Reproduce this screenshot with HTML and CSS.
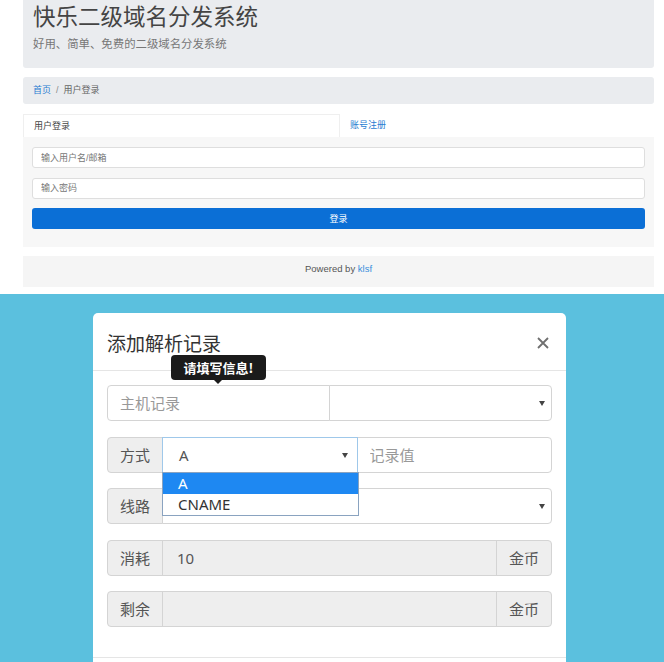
FILE: index.html
```html
<!DOCTYPE html>
<html lang="zh-CN">

<head>
    <meta charset="UTF-8">
    <meta name="viewport" content="width=device-width, initial-scale=1.0">
    <title>快乐二级域名分发系统</title>
    <link rel="stylesheet" href="styles.css">
</head>

<body>

    <!-- 登录页 -->
    <div class="page">
        <div class="jumbotron">
            <h1>快乐二级域名分发系统</h1>
            <p>好用、简单、免费的二级域名分发系统</p>
        </div>

        <div class="breadcrumb">
            <a href="#">首页</a><span class="sep">/</span><span>用户登录</span>
        </div>

        <div class="tabs">
            <div class="tab active">用户登录</div>
            <a class="tab" href="#">账号注册</a>
        </div>

        <form class="login">
            <input type="text" placeholder="输入用户名/邮箱">
            <input type="password" placeholder="输入密码">
            <button type="button">登录</button>
        </form>

        <div class="footer">Powered by <a href="#">klsf</a></div>
    </div>

    <!-- 添加解析记录弹窗 -->
    <div class="overlay">
        <div class="modal">
            <div class="modal-header">
                <h4>添加解析记录</h4>
                <svg class="close" width="12" height="12" viewBox="0 0 12 12">
                    <path d="M1 1L11 11M11 1L1 11" stroke="#6f6f6f" stroke-width="1.8" fill="none" />
                </svg>
            </div>

            <div class="tip">请填写信息!</div>

            <div class="modal-body">
                <div class="input-group">
                    <input class="form-control half" type="text" placeholder="主机记录">
                    <div class="form-control select half"></div>
                </div>

                <div class="input-group">
                    <span class="addon">方式</span>
                    <div class="form-control select focus third">
                        <span class="value">A</span>
                        <ul class="dropdown">
                            <li class="selected">A</li>
                            <li>CNAME</li>
                        </ul>
                    </div>
                    <input class="form-control third" type="text" placeholder="记录值">
                </div>

                <div class="input-group">
                    <span class="addon">线路</span>
                    <div class="form-control select grow"></div>
                </div>

                <div class="input-group">
                    <span class="addon">消耗</span>
                    <div class="form-control readonly grow">10</div>
                    <span class="addon right">金币</span>
                </div>

                <div class="input-group">
                    <span class="addon">剩余</span>
                    <div class="form-control readonly grow"></div>
                    <span class="addon right">金币</span>
                </div>
            </div>

            <div class="modal-footer"></div>
        </div>
    </div>

</body>

</html>
```

FILE: styles.css
```css
body {
    margin: 0;
    font-family: "Liberation Sans", "Noto Sans CJK SC", sans-serif;
    background-color: #fff;
    width: 664px;
    height: 662px;
    overflow: hidden;
}

a {
    text-decoration: none;
    color: #2a7dd1;
}

/* 登录页 */
.page {
    margin-left: 23px;
    width: 631px;
    padding-bottom: 7px;
}

.jumbotron {
    background-color: #eaecef;
    padding: 4px 10px 17px;
    border-radius: 0 0 3px 3px;
}

.jumbotron h1 {
    margin: 0;
    font-size: 22.5px;
    line-height: 28px;
    font-weight: normal;
    color: #444;
}

.jumbotron p {
    margin: 5px 0 0;
    font-size: 11.4px;
    line-height: 14px;
    color: #777;
}

.breadcrumb {
    margin-top: 9px;
    height: 27px;
    line-height: 27px;
    padding: 0 10px;
    background-color: #eaecef;
    border-radius: 3px;
    font-size: 9px;
    color: #666;
}

.breadcrumb .sep {
    margin: 0 5px;
    color: #888;
}

.tabs {
    margin-top: 10px;
    display: flex;
    height: 23px;
}

.tab {
    line-height: 23px;
    font-size: 9px;
    padding: 0 10px;
}

.tab.active {
    width: 295px;
    color: #444;
    border: 1px solid #efefef;
    border-bottom: none;
    line-height: 22px;
}

.login {
    background-color: #f7f7f7;
    padding: 10px 9px 18px;
    display: flex;
    flex-direction: column;
    gap: 9.5px;
}

.login input {
    box-sizing: border-box;
    height: 21px;
    margin: 0;
    padding: 0 8px;
    border: 1px solid #dedede;
    border-radius: 3px;
    background-color: #fff;
    font-family: inherit;
    font-size: 9px;
}

.login input::placeholder {
    color: #777;
}

.login button {
    height: 21px;
    border: none;
    border-radius: 3px;
    background-color: #0b6fd6;
    color: #fff;
    font-family: inherit;
    font-size: 9px;
}

.footer {
    margin-top: 9px;
    height: 31px;
    line-height: 26px;
    text-align: center;
    background-color: #f5f5f5;
    font-size: 9.5px;
    color: #555;
}

.footer a {
    color: #3a8fdc;
}

/* 弹窗 */
.overlay {
    background-color: #5bc0de;
    height: 349px;
    padding-top: 19px;
    overflow: hidden;
}

.modal {
    position: relative;
    margin-left: 93px;
    width: 473px;
    background-color: #fff;
    border-radius: 5px 5px 0 0;
    font-family: "Noto Sans", "Noto Sans CJK SC", sans-serif;
}

.modal-header {
    display: flex;
    justify-content: space-between;
    align-items: center;
    height: 57px;
    padding: 0 17px 0 14px;
    border-bottom: 1px solid #e5e5e5;
}

.modal-header h4 {
    margin: 2px 0 0;
    font-size: 19px;
    font-weight: normal;
    color: #333;
    font-family: "Noto Sans CJK SC", sans-serif;
}

.close {
    margin-top: 3px;
}

.tip {
    position: absolute;
    left: 78px;
    top: 42px;
    width: 95px;
    height: 25px;
    line-height: 25px;
    text-align: center;
    background-color: #1b1b1b;
    border-radius: 4px;
    color: #fff;
    font-size: 13px;
    font-weight: bold;
    font-family: "Noto Sans CJK SC", sans-serif;
    z-index: 3;
}

.tip::after {
    content: "";
    position: absolute;
    left: 43px;
    bottom: -4px;
    border-left: 4px solid transparent;
    border-right: 4px solid transparent;
    border-top: 4px solid #1b1b1b;
}

.modal-body {
    padding: 14px 14px 14px;
}

.input-group {
    display: flex;
    height: 36px;
    margin-bottom: 15.5px;
}

.form-control,
.addon {
    box-sizing: border-box;
    height: 36px;
    line-height: 34px;
    margin: 0;
    border: 1px solid #d4d4d4;
    font-family: "Noto Sans", "Noto Sans CJK SC", sans-serif;
    font-size: 15px;
    color: #555;
}

.form-control {
    position: relative;
    min-width: 0;
    padding: 0 12px;
    background-color: #fff;
}

.form-control::placeholder {
    color: #999;
}

.input-group > :first-child {
    border-radius: 4px 0 0 4px;
}

.input-group > :last-child {
    border-radius: 0 4px 4px 0;
}

.input-group > :not(:first-child) {
    margin-left: -1px;
}

.half {
    width: 223px;
}

.third {
    width: 196px;
}

.grow {
    flex: 1;
}

.addon {
    flex: none;
    width: 56px;
    text-align: center;
    background-color: #eee;
    font-family: "Noto Sans CJK SC", sans-serif;
}

.addon + .form-control {
    padding-left: 14px;
}

.readonly {
    background-color: #eee;
}

.select::after {
    content: "";
    position: absolute;
    right: 6px;
    top: 15px;
    border-left: 3px solid transparent;
    border-right: 3px solid transparent;
    border-top: 5px solid #444;
}

.select.focus {
    border-color: #9fc8ea;
    z-index: 2;
}

.select.focus::after {
    right: 9px;
}

.value {
    padding-left: 2px;
}

.dropdown {
    position: absolute;
    left: -1px;
    top: 34px;
    width: 195px;
    margin: 0;
    padding: 0;
    list-style: none;
    background-color: #fff;
    border: 1px solid #8aa3c0;
    z-index: 4;
}

.dropdown li {
    height: 21px;
    line-height: 21px;
    padding-left: 15px;
    color: #333;
}

.dropdown li.selected {
    background-color: #1e88f2;
    color: #fff;
}

.modal-footer {
    height: 20px;
    border-top: 1px solid #e5e5e5;
}
```
